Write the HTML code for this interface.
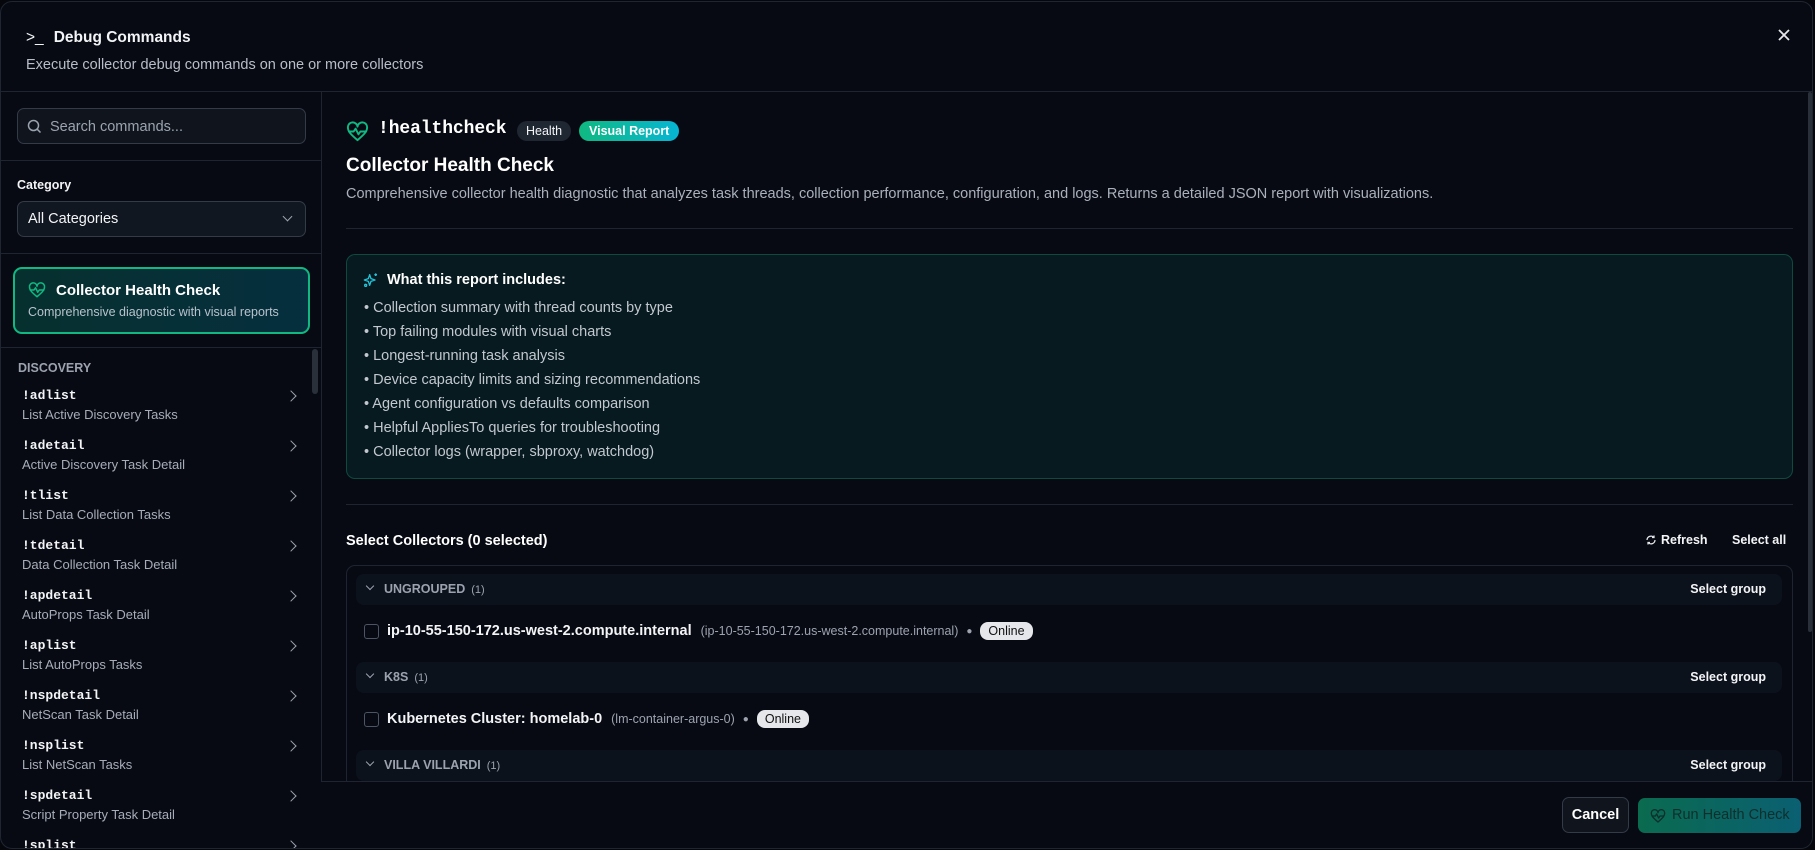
<!DOCTYPE html>
<html><head><meta charset="utf-8"><style>
*{box-sizing:border-box;margin:0;padding:0}
body{width:1815px;height:850px;background:#05070d;font-family:"Liberation Sans",sans-serif;color:#e5e7eb;overflow:hidden;position:relative}
.dlg{position:absolute;left:0px;top:1px;width:1813px;height:848px;background:#070a13;border:1px solid #1f2632;border-radius:12px;overflow:hidden}
.abs{position:absolute}
.mono{font-family:"Liberation Mono",monospace}
.hl{position:absolute;height:1px;background:#1e2530}
.item{position:absolute;left:21px}
.item .c{font-family:"Liberation Mono",monospace;font-weight:bold;font-size:13px;color:#f3f4f6}
.item .d{font-size:13px;color:#a7adb8;margin-top:4px}
.chev{position:absolute;left:286px;width:8px;height:8px;border-right:1.6px solid #9ca3af;border-top:1.6px solid #9ca3af;transform:rotate(45deg)}
.bl{position:absolute;left:363px;font-size:14.5px;color:#c3c8cf}
.grp{position:absolute;left:355px;width:1426px;height:31px;background:#0c121c;border-radius:8px}
.grp .n{position:absolute;left:28px;top:8px;font-size:12.5px;font-weight:bold;color:#9ca3af}
.grp .n span{font-weight:normal;font-size:11px;margin-left:6px}
.grp .s{position:absolute;right:16px;top:8px;font-size:12.5px;font-weight:bold;color:#f3f4f6}
.grp .v{position:absolute;left:11px;top:9px;width:6px;height:6px;border-right:1.3px solid #9ca3af;border-bottom:1.3px solid #9ca3af;transform:rotate(45deg)}
.row{position:absolute;left:363px;font-size:14.5px;display:flex;align-items:center;white-space:nowrap}
.cb{width:15px;height:15px;border:1.3px solid #4b5563;border-radius:3px;margin-right:8px}
.row b{color:#f3f4f6}
.row .g{color:#9ca3af;font-size:12.5px;margin-left:9px}
.row .dot{color:#9ca3af;margin:0 8px;font-size:10px}
.on{background:#e5e7eb;color:#111;border-radius:8px;padding:2px 8px;font-size:12.5px}
</style></head><body><div class="dlg">
<div class="abs" style="left:25px;top:27px;font-size:15.5px;font-weight:bold;color:#f3f4f6"><span style="font-weight:normal;margin-right:10px">&gt;_</span>Debug Commands</div>
<svg class="abs" style="left:1776px;top:26px" width="14" height="14" viewBox="0 0 14 14"><path d="M2 2L12 12M12 2L2 12" stroke="#e5e7eb" stroke-width="1.8"/></svg>
<div class="abs" style="left:25px;top:55px;font-size:14.5px;color:#b8bec8">Execute collector debug commands on one or more collectors</div>
<div class="hl" style="left:0;top:89px;width:1813px"></div>
<div class="abs" style="left:320px;top:90px;width:1px;height:690px;background:#1e2530"></div>
<div class="abs" style="left:16px;top:106px;width:289px;height:36px;border:1px solid #333b47;border-radius:7px;background:#0f141d"></div>
<svg class="abs" style="left:26px;top:117px" width="15" height="15" viewBox="0 0 15 15"><circle cx="6.5" cy="6.5" r="5" stroke="#9ca3af" stroke-width="1.5" fill="none"/><path d="M10.3 10.3L13.5 13.5" stroke="#9ca3af" stroke-width="1.5"/></svg>
<div class="abs" style="left:49px;top:117px;font-size:14.5px;color:#9ca3af">Search commands...</div>
<div class="hl" style="left:0;top:158px;width:320px"></div>
<div class="abs" style="left:16px;top:176px;font-size:12.5px;font-weight:bold;color:#f3f4f6">Category</div>
<div class="abs" style="left:16px;top:199px;width:289px;height:36px;border:1px solid #333b47;border-radius:7px;background:#111720"></div>
<div class="abs" style="left:27px;top:209px;font-size:14.5px;color:#f3f4f6">All Categories</div>
<div class="abs" style="left:283px;top:211px;width:7px;height:7px;border-right:1.4px solid #9ca3af;border-bottom:1.4px solid #9ca3af;transform:rotate(45deg)"></div>
<div class="hl" style="left:0;top:251px;width:320px"></div>
<div class="abs" style="left:12px;top:265px;width:297px;height:67px;border:2px solid #10b981;border-radius:9px;background:linear-gradient(90deg,#06302e,#062f3f)"></div>
<svg class="abs" style="left:27px;top:279px" width="18" height="18" viewBox="0 0 24 24" fill="none" stroke="#10b981" stroke-width="2" stroke-linejoin="round" stroke-linecap="round"><path d="M12 21C5 15 2 12 2 8a5 5 0 0 1 10-1 5 5 0 0 1 10 1c0 4-3 7-10 13z"/><path d="M3 12h5l2-3 3 6 2-3h6"/></svg>
<div class="abs" style="left:55px;top:280px;font-size:15px;font-weight:bold;color:#fff">Collector Health Check</div>
<div class="abs" style="left:27px;top:303px;font-size:12.5px;color:#b8c2cc">Comprehensive diagnostic with visual reports</div>
<div class="hl" style="left:0;top:345px;width:320px"></div>
<div class="abs" style="left:311px;top:347px;width:6px;height:45px;border-radius:3px;background:#2a3039"></div>
<div class="abs" style="left:17px;top:359px;font-size:12.5px;font-weight:bold;color:#9ca3af">DISCOVERY</div>
<div class="item" style="top:386px"><div class="c">!adlist</div><div class="d">List Active Discovery Tasks</div></div><div class="chev" style="top:390px"></div>
<div class="item" style="top:436px"><div class="c">!adetail</div><div class="d">Active Discovery Task Detail</div></div><div class="chev" style="top:440px"></div>
<div class="item" style="top:486px"><div class="c">!tlist</div><div class="d">List Data Collection Tasks</div></div><div class="chev" style="top:490px"></div>
<div class="item" style="top:536px"><div class="c">!tdetail</div><div class="d">Data Collection Task Detail</div></div><div class="chev" style="top:540px"></div>
<div class="item" style="top:586px"><div class="c">!apdetail</div><div class="d">AutoProps Task Detail</div></div><div class="chev" style="top:590px"></div>
<div class="item" style="top:636px"><div class="c">!aplist</div><div class="d">List AutoProps Tasks</div></div><div class="chev" style="top:640px"></div>
<div class="item" style="top:686px"><div class="c">!nspdetail</div><div class="d">NetScan Task Detail</div></div><div class="chev" style="top:690px"></div>
<div class="item" style="top:736px"><div class="c">!nsplist</div><div class="d">List NetScan Tasks</div></div><div class="chev" style="top:740px"></div>
<div class="item" style="top:786px"><div class="c">!spdetail</div><div class="d">Script Property Task Detail</div></div><div class="chev" style="top:790px"></div>
<div class="item" style="top:836px"><div class="c">!splist</div></div><div class="chev" style="top:840px"></div>

<svg class="abs" style="left:345px;top:118px" width="23" height="23" viewBox="0 0 24 24" fill="none" stroke="#10b981" stroke-width="2" stroke-linejoin="round" stroke-linecap="round"><path d="M12 21C5 15 2 12 2 8a5 5 0 0 1 10-1 5 5 0 0 1 10 1c0 4-3 7-10 13z"/><path d="M3 12h5l2-3 3 6 2-3h6"/></svg>
<div class="abs mono" style="left:377px;top:117px;font-size:18px;font-weight:bold;color:#fff;letter-spacing:-0.1px">!healthcheck</div>
<div class="abs" style="left:516px;top:119px;height:20px;padding:0 9px;line-height:20px;background:#1f2733;border-radius:10px;font-size:12.5px;color:#f3f4f6">Health</div>
<div class="abs" style="left:578px;top:119px;height:20px;padding:0 10px;line-height:20px;background:linear-gradient(90deg,#10b981,#06b6d4);border-radius:10px;font-size:12.5px;color:#fff;font-weight:bold">Visual Report</div>
<div class="abs" style="left:345px;top:153px;font-size:19px;font-weight:bold;color:#fff">Collector Health Check</div>
<div class="abs" style="left:345px;top:184px;font-size:14.5px;color:#aab1bb">Comprehensive collector health diagnostic that analyzes task threads, collection performance, configuration, and logs. Returns a detailed JSON report with visualizations.</div>
<div class="hl" style="left:345px;top:226px;width:1447px"></div>
<div class="abs" style="left:345px;top:252px;width:1447px;height:225px;border:1px solid #0f4a3f;border-radius:9px;background:#061a20"></div>
<svg class="abs" style="left:362px;top:270px" width="16" height="16" viewBox="0 0 24 24" fill="none" stroke="#22c3d8" stroke-width="2" stroke-linejoin="round"><path d="M10 4l2 6 6 2-6 2-2 6-2-6-6-2 6-2z"/><path d="M19 2v4M17 4h4"/><circle cx="4" cy="20" r="1.5"/></svg>
<div class="abs" style="left:386px;top:270px;font-size:14.5px;font-weight:bold;color:#fff">What this report includes:</div>
<div class="bl" style="top:298px">• Collection summary with thread counts by type</div>
<div class="bl" style="top:322px">• Top failing modules with visual charts</div>
<div class="bl" style="top:346px">• Longest-running task analysis</div>
<div class="bl" style="top:370px">• Device capacity limits and sizing recommendations</div>
<div class="bl" style="top:394px">• Agent configuration vs defaults comparison</div>
<div class="bl" style="top:418px">• Helpful AppliesTo queries for troubleshooting</div>
<div class="bl" style="top:442px">• Collector logs (wrapper, sbproxy, watchdog)</div>
<div class="hl" style="left:345px;top:502px;width:1447px"></div>
<div class="abs" style="left:345px;top:531px;font-size:14.5px;font-weight:bold;color:#fff">Select Collectors (0 selected)</div>
<svg class="abs" style="left:1644px;top:532px" width="12" height="12" viewBox="0 0 24 24" fill="none" stroke="#e5e7eb" stroke-width="2.5"><path d="M20 12a8 8 0 0 1-14 5M4 12a8 8 0 0 1 14-5"/><path d="M18 3v4h-4M6 21v-4h4"/></svg>
<div class="abs" style="left:1660px;top:531px;font-size:12.5px;font-weight:bold;color:#f3f4f6">Refresh</div>
<div class="abs" style="left:1731px;top:531px;font-size:12.5px;font-weight:bold;color:#f3f4f6">Select all</div>
<div class="abs" style="left:345px;top:563px;width:1447px;height:300px;border:1px solid #1e2530;border-radius:9px"></div>
<div class="grp" style="top:572px"><div class="v"></div><div class="n">UNGROUPED<span>(1)</span></div><div class="s">Select group</div></div>
<div class="row" style="top:620px"><div class="cb"></div><b>ip-10-55-150-172.us-west-2.compute.internal</b><span class="g">(ip-10-55-150-172.us-west-2.compute.internal)</span><span class="dot">●</span><span class="on">Online</span></div>
<div class="grp" style="top:660px"><div class="v"></div><div class="n">K8S<span>(1)</span></div><div class="s">Select group</div></div>
<div class="row" style="top:708px"><div class="cb"></div><b>Kubernetes Cluster: homelab-0</b><span class="g">(lm-container-argus-0)</span><span class="dot">●</span><span class="on">Online</span></div>
<div class="grp" style="top:748px"><div class="v"></div><div class="n">VILLA VILLARDI<span>(1)</span></div><div class="s">Select group</div></div>
<div class="abs" style="left:1807px;top:90px;width:4px;height:540px;background:#2a3039;border-radius:2px"></div>
<div class="abs" style="left:321px;top:779px;width:1492px;height:70px;background:#070a13;border-top:1px solid #1e2530"></div>
<div class="abs" style="left:1561px;top:795px;width:67px;height:36px;border:1px solid #333b47;border-radius:7px;background:#0f141d;font-size:14.5px;font-weight:bold;color:#fff;text-align:center;line-height:34px">Cancel</div>
<div class="abs" style="left:1637px;top:796px;width:163px;height:35px;border-radius:7px;background:linear-gradient(90deg,#0a6b4f,#0b5f72);font-size:14.5px;color:#0f2f2c;line-height:35px;padding-left:34px">Run Health Check</div>
<svg class="abs" style="left:1649px;top:806px" width="16" height="16" viewBox="0 0 24 24" fill="none" stroke="#0f2f2c" stroke-width="2" stroke-linejoin="round"><path d="M12 21C5 15 2 12 2 8a5 5 0 0 1 10-1 5 5 0 0 1 10 1c0 4-3 7-10 13z"/><path d="M3 12h5l2-3 3 6 2-3h6"/></svg>
</div></body></html>
